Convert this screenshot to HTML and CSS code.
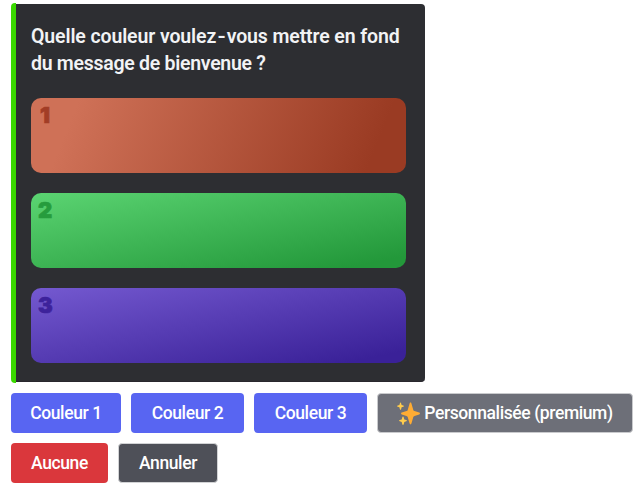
FILE: index.html
```html
<!DOCTYPE html>
<html lang="fr">
<head>
<meta charset="utf-8">
<title>Message de bienvenue</title>
<link rel="stylesheet" href="styles.css">
</head>
<body>
<article class="embed">
  <div class="panel">
    <h1 class="question"><span class="line-one">Quelle couleur voulez<span class="hyphen">-</span>vous mettre en fond</span><br><span class="line-two">du message de bienvenue ?</span></h1>
    <div class="swatches">
      <div class="swatch red"><span>1</span></div>
      <div class="swatch green"><span>2</span></div>
      <div class="swatch purple"><span>3</span></div>
    </div>
  </div>
</article>
<div class="actions">
  <button class="btn primary w1"><span>Couleur 1</span></button>
  <button class="btn primary w2"><span>Couleur 2</span></button>
  <button class="btn primary w2"><span>Couleur 3</span></button>
  <button class="btn muted w3">
    <svg class="sparkles" viewBox="0 0 23 23" aria-hidden="true">
      <path fill="#ffac33" d="M13.500 0.5c.6 0 .8.500 1 1.200l1.800 6.200c.2.700.500 1 1.200 1.200l4.700 1.500c1 .3 1 1.500 0 1.800l-4.700 1.500c-.7.200-1 .5-1.200 1.200l-1.800 6.200c-.3 1.500-1.700 1.500-2 0l-1.800-6.200c-.2-.7-.5-1-1.200-1.200l-4.700-1.500c-1-.3-1-1.500 0-1.800l4.700-1.500c.7-.2 1-.5 1.200-1.200l1.800-6.200c.2-.7.400-1.200 1-1.200z"/>
      <path fill="#ffcc4d" d="M3.500.5c.4 0 .5.300.6.700l.5 1.900 1.700.5c.8.200.8 1 0 1.200l-1.700.5-.5 1.900c-.2.800-1 .8-1.200 0l-.5-1.900-1.700-.5c-.8-.2-.8-1 0-1.200l1.700-.5.500-1.900c.1-.4.200-.7.600-.7zM6 14.500c.4 0 .6.300.7.700l.6 2.300 2 .6c.8.200.8 1 0 1.200l-2 .6-.6 2.300c-.2.900-1.200.900-1.400 0l-.6-2.300-2-.6c-.8-.2-.8-1 0-1.200l2-.6.6-2.300c.1-.4.300-.7.700-.7z"/>
    </svg>
    <span class="premium">Personnalisée (premium)</span>
  </button>
  <button class="btn danger w4"><span>Aucune</span></button>
  <button class="btn dark w5"><span>Annuler</span></button>
</div>
</body>
</html>
```
FILE: styles.css
```css
* { box-sizing: border-box; }
body {
  margin: 0;
  padding: 3px 0 0 11px;
  background: #fff;
  font-family: Roboto, "Noto Sans", sans-serif;
}
.embed {
  width: 414px;
  height: 380px;
  padding: 1px 0;
  border-left: 5px solid #3ad900;
  border-radius: 4px 0 0 4px;
}
.panel {
  height: 378px;
  padding: 19px 19px 0 15px;
  background: #2d2e32;
  border-bottom: 1px solid #29272d;
  border-radius: 0 4px 4px 0;
}
.question {
  margin: 0;
  height: 75px;
  color: #f2f3f5;
  font-size: 19.5px;
  font-weight: 600;
  line-height: 27px;
  white-space: nowrap;
}
.line-one { letter-spacing: -0.12px; }
.line-two { letter-spacing: -0.28px; }
.hyphen {
  display: inline-block;
  margin: 0 2px 0 1.500px;
  transform: scaleX(1.15);
}
.swatches { display: grid; gap: 20px; }
.swatch {
  height: 75px;
  padding: 4px 7px;
  border-radius: 10px;
  font: 900 22px/27px Inter, sans-serif;
  -webkit-text-stroke: 0.7px currentColor;
}
.red { padding-left: 9px; background: linear-gradient(112deg, #cf7157 12%, #9a3b23 90%); color: #a23d26; }
.green { background: linear-gradient(to bottom right, #5bd472, #23983a 92%); color: #269c3d; }
.purple { background: linear-gradient(to bottom right, #7459d0, #3a2198 92%); color: #3d229b; }
.actions {
  display: flex;
  flex-wrap: wrap;
  gap: 10px;
  padding-top: 10px;
}
.btn {
  display: flex;
  align-items: center;
  justify-content: center;
  height: 40px;
  padding: 0;
  border: 0;
  border-radius: 4px;
  color: #fff;
  font: 500 17.5px/24px Roboto, "Noto Sans", sans-serif;
  letter-spacing: -0.4px;
  white-space: nowrap;
}
.primary { background: #5865f2; }
.muted { background: #6d6f78; border: 1px solid #c9cacd; gap: 4px; }
.danger { background: #da373c; }
.dark { background: #4e5058; border: 1px solid #d2d3d5; }
.w1 { width: 110px; }
.w2 { width: 113px; }
.w3 { width: 256px; }
.w4 { width: 97px; }
.w5 { width: 100px; }
.sparkles { width: 23px; height: 23px; }
```
